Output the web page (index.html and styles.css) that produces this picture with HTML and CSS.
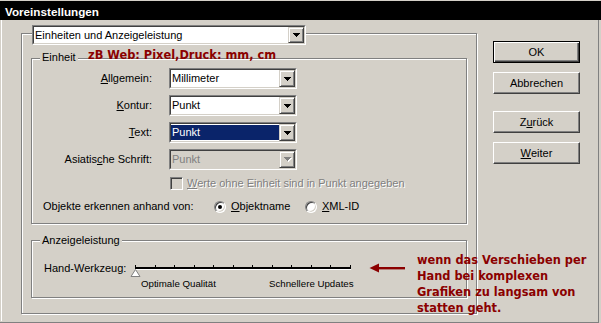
FILE: index.html
```html
<!DOCTYPE html>
<html>
<head>
<meta charset="utf-8">
<link rel="stylesheet" href="styles.css">
</head>
<body>
<div class="window">
  <div class="titlebar">Voreinstellungen</div>
  <div class="client">
    <div class="frame">
      <div class="combo topcombo">
        <div class="combo-inner">
          <div class="value"><span>Einheiten und Anzeigeleistung</span></div>
          <div class="drop"><svg width="7" height="4" viewBox="0 0 7 4"><path d="M0 0h7v1h-1v1h-1v1h-1v1h-1v-1h-1v-1h-1v-1h-1z" fill="#000"/></svg></div>
        </div>
      </div>

      <div class="group einheit">
        <div class="legend">Einheit</div>
        <div class="grid">
          <div class="label"><u>A</u>llgemein:</div>
          <div class="combo">
            <div class="combo-inner">
              <div class="value"><span>Millimeter</span></div>
              <div class="drop"><svg width="7" height="4" viewBox="0 0 7 4"><path d="M0 0h7v1h-1v1h-1v1h-1v1h-1v-1h-1v-1h-1v-1h-1z" fill="#000"/></svg></div>
            </div>
          </div>
          <div class="label"><u>K</u>ontur:</div>
          <div class="combo">
            <div class="combo-inner">
              <div class="value"><span>Punkt</span></div>
              <div class="drop"><svg width="7" height="4" viewBox="0 0 7 4"><path d="M0 0h7v1h-1v1h-1v1h-1v1h-1v-1h-1v-1h-1v-1h-1z" fill="#000"/></svg></div>
            </div>
          </div>
          <div class="label"><u>T</u>ext:</div>
          <div class="combo">
            <div class="combo-inner">
              <div class="value selected"><span>Punkt</span></div>
              <div class="drop"><svg width="7" height="4" viewBox="0 0 7 4"><path d="M0 0h7v1h-1v1h-1v1h-1v1h-1v-1h-1v-1h-1v-1h-1z" fill="#000"/></svg></div>
            </div>
          </div>
          <div class="label">Asiatis<u>c</u>he Schrift:</div>
          <div class="combo disabled">
            <div class="combo-inner">
              <div class="value"><span>Punkt</span></div>
              <div class="drop"><svg width="8" height="5" viewBox="0 0 8 5"><path d="M1 1h7v1h-1v1h-1v1h-1v1h-1v-1h-1v-1h-1v-1h-1z" fill="#fff"/><path d="M0 0h7v1h-1v1h-1v1h-1v1h-1v-1h-1v-1h-1v-1h-1z" fill="#808080"/></svg></div>
            </div>
          </div>
        </div>
        <div class="check-row">
          <span class="checkbox"></span>
          <span class="check-text"><u>W</u>erte ohne Einheit sind in Punkt angegeben</span>
        </div>
        <div class="radio-row">
          <span class="radio-caption">Objekte erkennen anhand von:</span>
          <span class="radio checked"></span>
          <span class="radio-label first"><u>O</u>bjektname</span>
          <span class="radio"></span>
          <span class="radio-label"><u>X</u>ML-ID</span>
        </div>
      </div>

      <div class="group anzeige">
        <div class="legend">Anzeigeleistung</div>
        <div class="slider-row">
          <span class="slider-label">Hand-Werkzeug:</span>
          <svg class="slider" width="225" height="14" viewBox="0 0 225 14">
            <rect x="5" y="3" width="216" height="2" fill="#000"/>
            <rect x="5" y="5" width="216" height="1" fill="#fff"/>
            <g fill="#000">
              <rect x="5" y="1" width="1" height="2"/>
              <rect x="25" y="1" width="1" height="2"/>
              <rect x="44" y="1" width="1" height="2"/>
              <rect x="64" y="1" width="1" height="2"/>
              <rect x="83" y="1" width="1" height="2"/>
              <rect x="103" y="1" width="1" height="2"/>
              <rect x="122" y="1" width="1" height="2"/>
              <rect x="142" y="1" width="1" height="2"/>
              <rect x="161" y="1" width="1" height="2"/>
              <rect x="181" y="1" width="1" height="2"/>
              <rect x="200" y="1" width="1" height="2"/>
              <rect x="220" y="1" width="1" height="2"/>
            </g>
            <polygon points="5.5,5.5 10,12.5 1,12.5" fill="#fff" stroke="#808080" stroke-width="1"/>
          </svg>
        </div>
        <div class="scale">
          <span class="scale-left">Optimale Qualität</span>
          <span>Schnellere Updates</span>
        </div>
      </div>
    </div>

    <div class="buttons">
      <div class="btn default">OK</div>
      <div class="btn">Abbrechen</div>
      <div class="btn spaced">Z<u>u</u>rück</div>
      <div class="btn"><u>W</u>eiter</div>
    </div>
  </div>

  <div class="note note-top">zB Web: Pixel,Druck: mm, cm</div>
  <svg class="arrow" width="38" height="10" viewBox="0 0 38 10">
    <polygon points="0.5,5 10,0.5 10,9.5" fill="#8b0000"/>
    <rect x="9" y="4" width="27" height="2.4" fill="#8b0000"/>
  </svg>
  <div class="note note-bottom">wenn das Verschieben per<br>Hand bei komplexen<br>Grafiken zu langsam von<br>statten geht.</div>
</div>
</body>
</html>
```

FILE: styles.css
```css
* { box-sizing: border-box; }

html, body {
  margin: 0;
  padding: 0;
  background: #d4d0c8;
}

body {
  width: 601px;
  height: 323px;
  overflow: hidden;
  font-family: "Liberation Sans", Arial, sans-serif;
  font-size: 11px;
  line-height: 13px;
  color: #000;
}

u { text-decoration: underline; text-underline-offset: 1px; }

.window {
  position: relative;
  width: 599px;
  height: 322px;
  border-right: 1px solid #808080;
  border-bottom: 1px solid #808080;
}

.titlebar {
  margin-top: 1px;
  width: 601px;
  height: 19px;
  padding: 2px 0 0 5px;
  line-height: 17px;
  background: #000;
  color: #fff;
  font-weight: bold;
  font-size: 11.7px;
}

.client {
  display: flex;
  align-items: flex-start;
  margin-left: 1px;
  border-left: 1px solid #fff;
  height: 301px;
}

.frame {
  margin: 13px 0 0 19px;
  width: 456px;
  height: 281px;
  flex: none;
  border: 1px solid #808080;
  box-shadow: 1px 1px 0 #fff, inset 1px 1px 0 #fff;
}

/* combo boxes */
.combo {
  display: flex;
  height: 21px;
  border: 1px solid;
  border-color: #808080 #fff #fff #808080;
}
.combo-inner {
  flex: 1;
  display: flex;
  border: 1px solid;
  border-color: #404040 #d4d0c8 #d4d0c8 #404040;
  background: #fff;
}
.value {
  flex: 1;
  display: flex;
  padding: 1px 0;
}
.value span {
  flex: 1;
  display: flex;
  align-items: center;
  padding-left: 1px;
  white-space: nowrap;
}
.value.selected span {
  background: #0a246a;
  color: #fff;
}
.drop {
  width: 16px;
  flex: none;
  display: flex;
  align-items: center;
  justify-content: center;
  background: #d4d0c8;
  border: 1px solid;
  border-color: #d4d0c8 #404040 #404040 #d4d0c8;
  box-shadow: inset 1px 1px 0 #fff, inset -1px -1px 0 #808080;
}
.drop svg { display: block; margin-left: 1px; }
.combo.disabled .combo-inner { background: #d4d0c8; }
.combo.disabled .value span { color: #808080; }

.topcombo {
  margin: -9px 0 0 10px;
  width: 274px;
  height: 20px;
}

/* group boxes */
.group {
  margin-left: 9px;
  width: 436px;
  border: 1px solid #808080;
  box-shadow: 1px 1px 0 #fff, inset 1px 1px 0 #fff;
}
.einheit { margin-top: 13px; height: 166px; }
.anzeige { margin-top: 16px; height: 58px; }

.legend {
  display: block;
  width: fit-content;
  height: 13px;
  margin: -8px 0 0 8px;
  padding: 0 2px;
  line-height: 13px;
  background: #d4d0c8;
}
.anzeige .legend { margin-top: -7px; }

.grid {
  display: grid;
  grid-template-columns: 120px 128px;
  grid-auto-rows: 21px;
  column-gap: 17px;
  row-gap: 6px;
  margin-top: 4px;
  align-items: center;
}
.label { text-align: right; white-space: nowrap; }

.check-row {
  display: flex;
  align-items: center;
  height: 13px;
  margin: 7px 0 0 138px;
  color: #808080;
  text-shadow: 1px 1px 0 #fff;
  white-space: nowrap;
}
.checkbox {
  width: 13px;
  height: 13px;
  flex: none;
  margin-right: 4px;
  border: 1px solid;
  border-color: #808080 #fff #fff #808080;
  box-shadow: inset 1px 1px 0 #404040, inset -1px -1px 0 #d4d0c8;
  background: #d4d0c8;
}

.radio-row {
  display: flex;
  align-items: center;
  height: 13px;
  margin: 10px 0 0 11px;
  white-space: nowrap;
}
.radio-caption { width: 171px; flex: none; }
.radio {
  position: relative;
  width: 12px;
  height: 12px;
  flex: none;
  border-radius: 50%;
  border: 1px solid;
  border-color: #808080 #fff #fff #808080;
  box-shadow: inset 1px 1px 0 #404040, inset -1px -1px 0 #d4d0c8;
  background: #fff;
  margin-top: 1px;
}
.radio.checked::after {
  content: "";
  position: absolute;
  left: 3px;
  top: 3px;
  width: 4px;
  height: 4px;
  border-radius: 50%;
  background: #000;
}
.radio-label { margin-left: 5px; }
.radio-label.first { width: 74px; flex: none; }

.slider-row {
  display: flex;
  align-items: flex-start;
  height: 16px;
  margin: 15px 0 0 12px;
  white-space: nowrap;
}
.slider-label { width: 86px; flex: none; }
.slider { display: block; margin-top: 2px; }

.scale {
  display: flex;
  margin-left: 109px;
  font-size: 9.7px;
  line-height: 11px;
  white-space: nowrap;
}
.scale-left { width: 128px; flex: none; }

/* buttons */
.buttons {
  display: flex;
  flex-direction: column;
  margin: 21px 0 0 16px;
  gap: 9px;
}
.btn {
  width: 87px;
  height: 22px;
  display: flex;
  align-items: center;
  justify-content: center;
  border: 1px solid;
  border-color: #fff #404040 #404040 #fff;
  box-shadow: inset -1px -1px 0 #808080;
  background: #d4d0c8;
}
.btn.default {
  border: 1px solid #000;
  box-shadow: inset 1px 1px 0 #fff, inset -1px -1px 0 #404040, inset -2px -2px 0 #808080;
}
.btn.spaced { margin-top: 8px; }

/* annotations */
.note {
  position: absolute;
  font-family: "DejaVu Sans", Verdana, sans-serif;
  font-weight: bold;
  font-size: 11.4px;
  line-height: 16px;
  color: #8b0000;
  white-space: nowrap;
}
.note-top { left: 88px; top: 46px; }
.note-bottom { left: 417px; top: 251px; }
.arrow { position: absolute; left: 369px; top: 262px; }
```
